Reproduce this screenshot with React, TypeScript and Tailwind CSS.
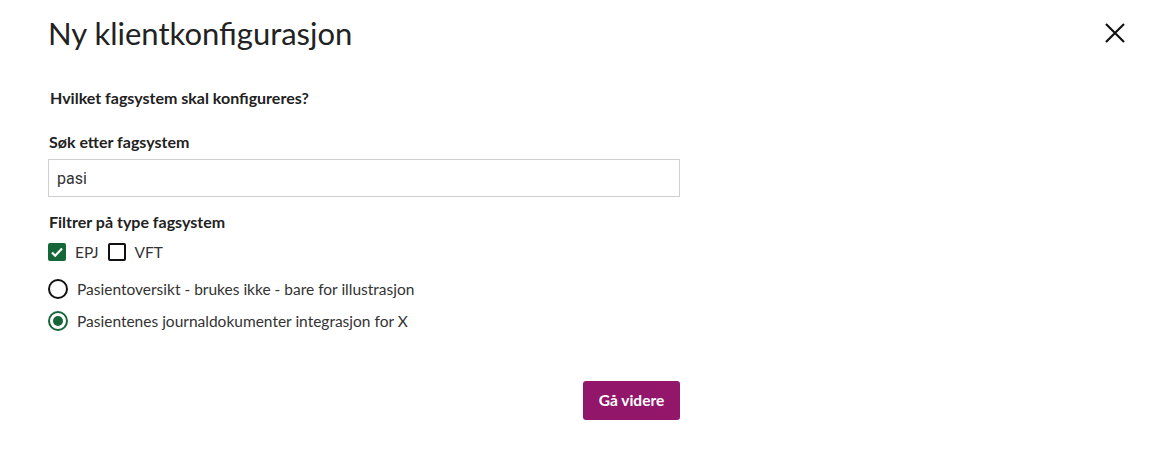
import { useState } from "react";

const font = { fontFamily: "Lato, 'Noto Sans', sans-serif" };

export default function App() {
  const [query, setQuery] = useState("pasi");
  const [epj, setEpj] = useState(true);
  const [vft, setVft] = useState(false);
  const [valgt, setValgt] = useState("journal");

  const systemer = [
    { id: "oversikt", navn: "Pasientoversikt - brukes ikke - bare for illustrasjon" },
    { id: "journal", navn: "Pasientenes journaldokumenter integrasjon for X" },
  ];

  return (
    <div className="relative h-[456px] w-[1149px] bg-white text-[#222]" style={font}>
      <button className="absolute right-[22px] top-[21px] text-[#111]" aria-label="Lukk">
        <svg width="24" height="24" viewBox="0 0 24 24" fill="none" stroke="currentColor" strokeWidth="2.2">
          <path d="M3 3l18 18M21 3L3 21" />
        </svg>
      </button>

      <div className="w-[680px] pl-[48px] pt-[14px]">
        <h1 className="text-[31px] font-normal leading-[38px] text-[#222]">Ny klientkonfigurasjon</h1>

        <p className="mt-[36px] pl-[2px] text-[16px] font-bold leading-[20px]">Hvilket fagsystem skal konfigureres?</p>

        <label htmlFor="sok" className="mt-[24px] block pl-[1px] text-[16px] font-bold leading-[20px]">
          Søk etter fagsystem
        </label>
        <input
          id="sok"
          value={query}
          onChange={(e) => setQuery(e.target.value)}
          className="mt-[7px] h-[38px] w-[632px] border border-[#cfcfcf] px-[8px] text-[16px] text-[#333] outline-none"
          style={{ fontFamily: "Roboto, 'Liberation Sans', sans-serif" }}
        />

        <p className="mt-[15px] pl-[1px] text-[16px] font-bold leading-[20px]">Filtrer på type fagsystem</p>

        <div className="mt-[10px] flex items-center gap-[9px] text-[15.5px] leading-[20px] text-[#333]">
          <label className="flex cursor-pointer items-center gap-[9px]">
            <input type="checkbox" className="sr-only" checked={epj} onChange={(e) => setEpj(e.target.checked)} />
            <span
              className={
                epj
                  ? "flex h-[18px] w-[18px] items-center justify-center rounded-[2px] bg-[#17663a]"
                  : "flex h-[18px] w-[18px] items-center justify-center rounded-[2px] border-2 border-[#111]"
              }
            >
              {epj && (
                <svg width="14" height="14" viewBox="0 0 14 14" fill="none" stroke="white" strokeWidth="2.2">
                  <path d="M2 7.5l3.2 3.2L12 3.5" />
                </svg>
              )}
            </span>
            EPJ
          </label>
          <label className="flex cursor-pointer items-center gap-[9px]">
            <input type="checkbox" className="sr-only" checked={vft} onChange={(e) => setVft(e.target.checked)} />
            <span
              className={
                vft
                  ? "flex h-[18px] w-[18px] items-center justify-center rounded-[2px] bg-[#17663a]"
                  : "flex h-[18px] w-[18px] items-center justify-center rounded-[2px] border-2 border-[#111]"
              }
            >
              {vft && (
                <svg width="14" height="14" viewBox="0 0 14 14" fill="none" stroke="white" strokeWidth="2.2">
                  <path d="M2 7.5l3.2 3.2L12 3.5" />
                </svg>
              )}
            </span>
            VFT
          </label>
        </div>

        <div className="mt-[17px] flex flex-col gap-[12px] text-[15.5px] leading-[20px] text-[#333]">
          {systemer.map((s) => (
            <label key={s.id} className="flex cursor-pointer items-center gap-[9px]">
              <input type="radio" name="fagsystem" className="sr-only" checked={valgt === s.id} onChange={() => setValgt(s.id)} />
              <span
                className={
                  valgt === s.id
                    ? "flex h-[20px] w-[20px] items-center justify-center rounded-full border-2 border-[#17663a]"
                    : "flex h-[20px] w-[20px] items-center justify-center rounded-full border-2 border-[#111]"
                }
              >
                {valgt === s.id && <span className="h-[10px] w-[10px] rounded-full bg-[#17663a]" />}
              </span>
              {s.navn}
            </label>
          ))}
        </div>

        <div className="mt-[50px] flex justify-end">
          <button className="h-[39px] w-[97px] rounded-[3px] bg-[#92176a] text-[15.5px] font-bold text-white">
            Gå videre
          </button>
        </div>
      </div>
    </div>
  );
}
